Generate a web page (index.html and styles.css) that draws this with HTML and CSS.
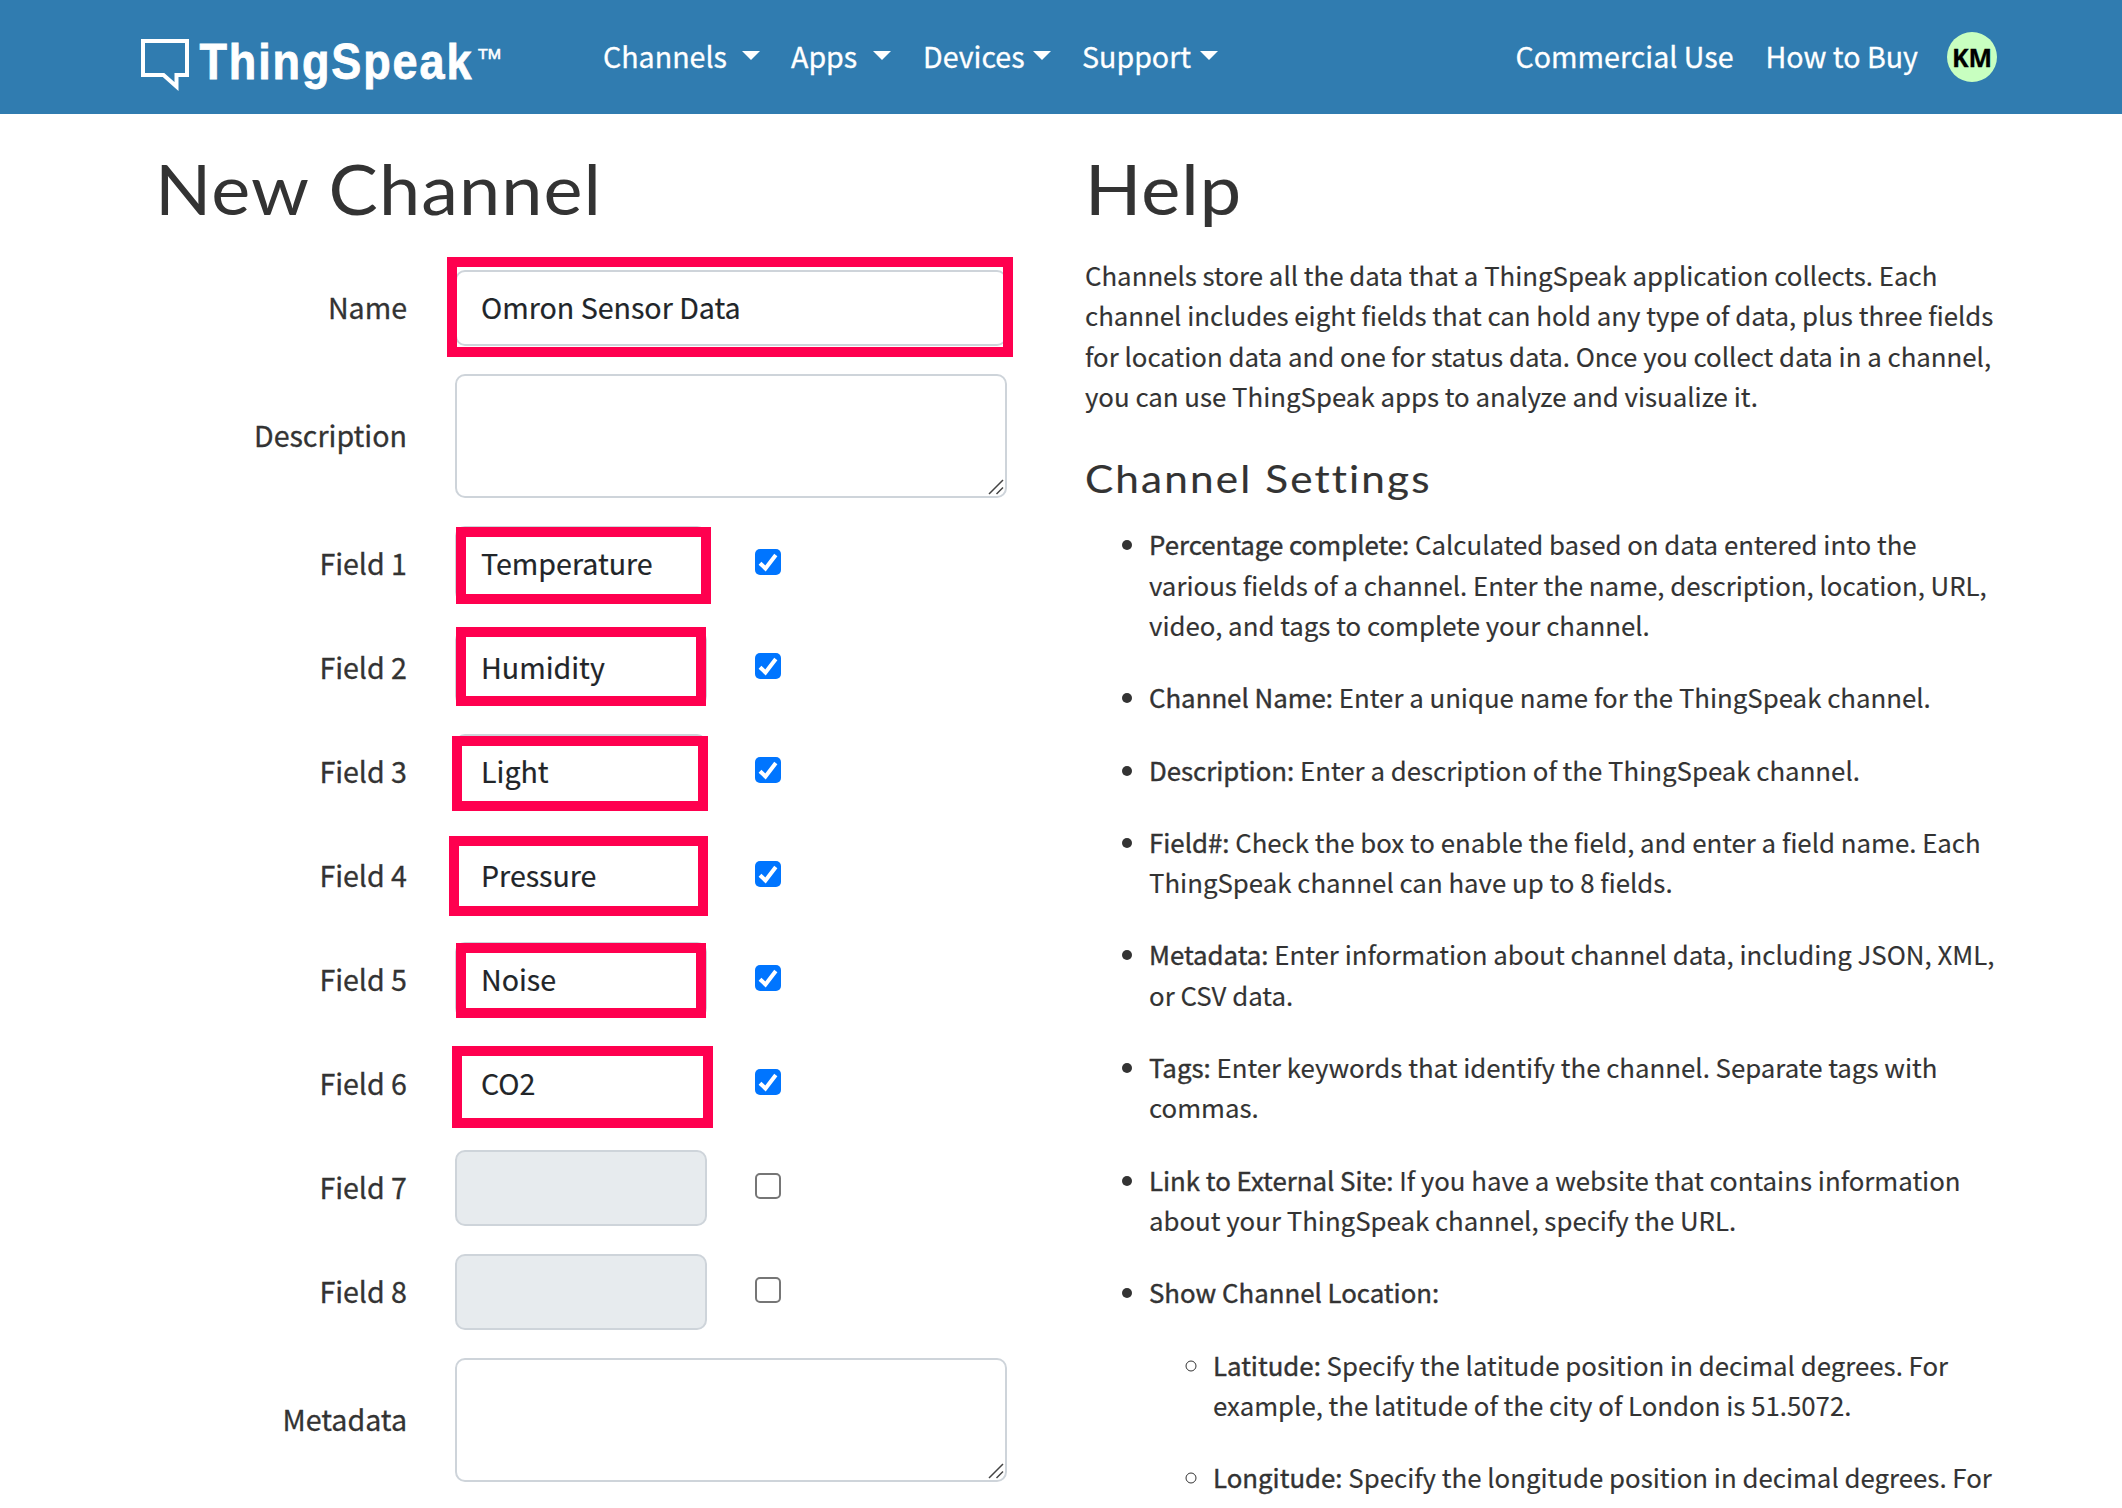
FILE: index.html
```html
<!DOCTYPE html>
<html lang="en">
<head>
<meta charset="utf-8">
<title>New Channel - ThingSpeak</title>
<link rel="stylesheet" href="styles.css">
</head>
<body>
<header class="navbar">
  <a class="brand" aria-label="ThingSpeak">
    <svg width="364" height="60" viewBox="0 0 364 60">
      <path d="M2 9H46V43H35.500V54.500L22.500 43H2Z" fill="none" stroke="#fff" stroke-width="4"/>
      <text class="brand-name" transform="translate(58.500 46.500) scale(0.9 1)">ThingSpeak</text>
      <text class="brand-tm" x="337" y="27" textLength="23" lengthAdjust="spacingAndGlyphs">TM</text>
    </svg>
  </a>
  <nav class="menu">
    <a class="menu-item wide"><span>Channels</span><i class="caret"></i></a>
    <a class="menu-item wide apps"><span>Apps</span><i class="caret"></i></a>
    <a class="menu-item devices"><span>Devices</span><i class="caret"></i></a>
    <a class="menu-item support"><span>Support</span><i class="caret"></i></a>
  </nav>
  <nav class="account">
    <a class="account-link">Commercial Use</a>
    <a class="account-link">How to Buy</a>
    <span class="avatar">KM</span>
  </nav>
</header>

<main class="page">
  <section class="form-col">
    <h1>New Channel</h1>
    <form class="channel-form">
      <div class="row"><label>Name</label><div class="control full"><input type="text" value="Omron Sensor Data"><span class="mark mark-name"></span></div></div>
      <div class="row tall"><label>Description</label><div class="control full"><textarea></textarea><svg class="grip" width="16" height="16"><path d="M1 15L15 1M8.500 15L15 8.500"/></svg></div></div>
      <div class="row"><label>Field 1</label><div class="control"><input type="text" value="Temperature"><span class="mark mark-1"></span></div><span class="check on"><svg width="26" height="26"><path d="M5 14.200L10.500 19.500L20.800 6"/></svg></span></div>
      <div class="row"><label>Field 2</label><div class="control"><input type="text" value="Humidity"><span class="mark mark-2"></span></div><span class="check on"><svg width="26" height="26"><path d="M5 14.200L10.500 19.500L20.800 6"/></svg></span></div>
      <div class="row"><label>Field 3</label><div class="control"><input type="text" value="Light"><span class="mark mark-3"></span></div><span class="check on"><svg width="26" height="26"><path d="M5 14.200L10.500 19.500L20.800 6"/></svg></span></div>
      <div class="row"><label>Field 4</label><div class="control"><input type="text" value="Pressure"><span class="mark mark-4"></span></div><span class="check on"><svg width="26" height="26"><path d="M5 14.200L10.500 19.500L20.800 6"/></svg></span></div>
      <div class="row"><label>Field 5</label><div class="control"><input type="text" value="Noise"><span class="mark mark-5"></span></div><span class="check on"><svg width="26" height="26"><path d="M5 14.200L10.500 19.500L20.800 6"/></svg></span></div>
      <div class="row"><label>Field 6</label><div class="control"><input type="text" value="CO2"><span class="mark mark-6"></span></div><span class="check on"><svg width="26" height="26"><path d="M5 14.200L10.500 19.500L20.800 6"/></svg></span></div>
      <div class="row"><label>Field 7</label><div class="control"><input type="text" disabled></div><span class="check"></span></div>
      <div class="row"><label>Field 8</label><div class="control"><input type="text" disabled></div><span class="check"></span></div>
      <div class="row tall"><label>Metadata</label><div class="control full"><textarea></textarea><svg class="grip" width="16" height="16"><path d="M1 15L15 1M8.500 15L15 8.500"/></svg></div></div>
    </form>
  </section>

  <section class="help-col">
    <h1>Help</h1>
    <p class="intro">Channels store all the data that a ThingSpeak application collects. Each<br>channel includes eight fields that can hold any type of data, plus three fields<br>for location data and one for status data. Once you collect data in a channel,<br>you can use ThingSpeak apps to analyze and visualize it.</p>
    <h2>Channel Settings</h2>
    <ul class="topics">
      <li><b>Percentage complete:</b> Calculated based on data entered into the<br>various fields of a channel. Enter the name, description, location, URL,<br>video, and tags to complete your channel.</li>
      <li><b>Channel Name:</b> Enter a unique name for the ThingSpeak channel.</li>
      <li><b>Description:</b> Enter a description of the ThingSpeak channel.</li>
      <li><b>Field#:</b> Check the box to enable the field, and enter a field name. Each<br>ThingSpeak channel can have up to 8 fields.</li>
      <li><b>Metadata:</b> Enter information about channel data, including JSON, XML,<br>or CSV data.</li>
      <li><b>Tags:</b> Enter keywords that identify the channel. Separate tags with<br>commas.</li>
      <li><b>Link to External Site:</b> If you have a website that contains information<br>about your ThingSpeak channel, specify the URL.</li>
      <li><b>Show Channel Location:</b>
        <ul class="subtopics">
          <li><b>Latitude:</b> Specify the latitude position in decimal degrees. For<br>example, the latitude of the city of London is 51.5072.</li>
          <li><b>Longitude:</b> Specify the longitude position in decimal degrees. For<br>example, the longitude of the city of London is -0.1275.</li>
        </ul>
      </li>
    </ul>
  </section>
</main>
</body>
</html>
```

FILE: styles.css
```css
* { box-sizing: border-box; }

html, body { height: 1508px; overflow: hidden; }

body {
  margin: 0;
  background: #fff;
  color: #333;
  font-family: "Noto Sans CJK SC", "Noto Sans", sans-serif;
  font-size: 25.8px;
  line-height: 40.32px;
}

/* Top bar */
.navbar {
  display: flex;
  align-items: center;
  height: 114px;
  padding: 0 125px 0 141px;
  background: #307cb0;
  color: #fff;
  font-size: 28.6px;
  white-space: nowrap;
  -webkit-text-stroke: 0.3px;
}
.brand { display: flex; width: 462px; margin-top: 9px; }
.brand-name {
  font: bold 50px "Liberation Sans", Arial, sans-serif;
  letter-spacing: 2.1px;
  fill: #fff;
  stroke: #fff;
  stroke-width: 0.8px;
}
.brand-tm { font: 15px "Liberation Sans", Arial, sans-serif; fill: #fff; stroke: #fff; stroke-width: 0.6px; }
.menu { display: flex; }
.menu-item { display: flex; align-items: center; justify-content: space-between; }
.menu-item span, .account-link { margin-top: -2px; }
.menu-item.wide { width: 157px; }
.menu-item + .menu-item { margin-left: 31px; }
.menu-item.wide.apps { width: 100px; }
.menu-item.devices { width: 128px; margin-left: 32px; }
.menu-item.support { width: 136px; }
.caret {
  border: 9px solid transparent;
  border-top-color: #fff;
  border-bottom: 0;
  margin-top: -3px;
}
.account { display: flex; align-items: center; margin-left: auto; }
.account-link { margin-right: 32px; }
.account-link + .account-link { margin-right: 29px; }
.avatar {
  width: 50px;
  height: 50px;
  border-radius: 50%;
  background: #c8ffc0;
  color: #000;
  font: bold 25px/50px "Open Sans", sans-serif;
  text-align: center;
}

/* Two-column body */
.page { display: flex; }
.form-col { width: 1085px; padding-left: 155px; }
.help-col { white-space: nowrap; -webkit-text-stroke: 0.15px; }

h1, h2 { transform: scaleX(1.07); transform-origin: left; }
h1 {
  margin: 0;
  padding-top: 34px;
  height: 141px;
  font: 400 69px/82px Lato, sans-serif;
  letter-spacing: 1px;
}
.form-col h1 { height: 156px; }

/* Form */
.channel-form { display: flex; flex-direction: column; gap: 28px; font-size: 28.6px; }
.row { display: flex; height: 76px; align-items: center; }
.row.tall { height: 124px; }
label { width: 252px; text-align: right; margin: -1px 48px 0 0; -webkit-text-stroke: 0.3px; }
.control { position: relative; width: 252px; height: 100%; }
.control.full { width: 552px; }
input, textarea {
  display: block;
  width: 100%;
  height: 100%;
  padding: 0 24px 4px;
  border: 2px solid #ced4da;
  border-radius: 10px;
  background: #fff;
  color: #212529;
  font: inherit;
  resize: none;
  -webkit-text-stroke: 0.2px;
}
input:disabled { background: #e7ebee; }
.grip { position: absolute; right: 3px; bottom: 3px; fill: none; stroke: #444; stroke-width: 1.5; }

.check {
  width: 26px;
  height: 26px;
  margin: -4px 0 0 48px;
  border: 2px solid #767676;
  border-radius: 5px;
}
.check.on { border: 0; background: #0075ff; }
.check svg { display: block; fill: none; stroke: #fff; stroke-width: 4; }

/* Highlight frames drawn over the inputs */
.mark { position: absolute; border: 10px solid #ff004f; }
.mark-name { left: -8px; top: -13px; width: 566px; height: 100px; }
.mark-1 { left: 1px; top: 1px; width: 255px; height: 77px; }
.mark-2 { left: 1px; top: -3px; width: 250px; height: 79px; }
.mark-3 { left: -3px; top: 2px; width: 256px; height: 75px; }
.mark-4 { left: -6px; top: -2px; width: 259px; height: 80px; }
.mark-5 { left: 1px; top: 1px; width: 250px; height: 75px; }
.mark-6 { left: -3px; top: 0; width: 261px; height: 82px; }

/* Help text */
.intro { margin: 0; }
h2 { margin: 36px 0 0; height: 72px; font: 400 39.5px/52px Lato, sans-serif; letter-spacing: 2px; }
ul { margin: 0; padding: 0 0 0 64px; }
.subtopics { padding-left: 64px; margin-top: 32px; }
li { margin-bottom: 32px; }
b { font-weight: 400; -webkit-text-stroke: 0.4px; }
```
